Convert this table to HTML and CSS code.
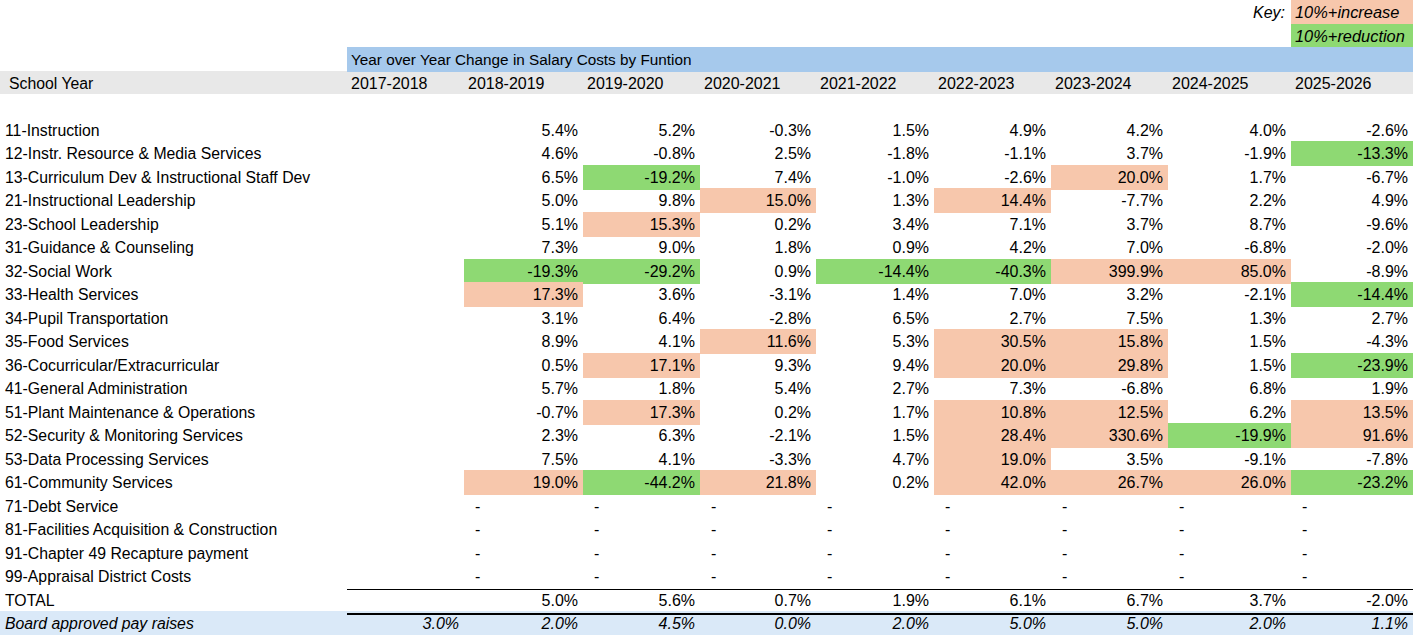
FILE: index.html
```html
<!DOCTYPE html>
<html lang="en">
<head>
<meta charset="utf-8">
<title>Year over Year Change in Salary Costs by Funtion</title>
<link rel="stylesheet" href="styles.css">
</head>
<body>
<div class="sheet">
  <div class="row">
    <div class="c"></div><div class="c"></div><div class="c"></div><div class="c"></div><div class="c"></div><div class="c"></div><div class="c"></div><div class="c"></div>
    <div class="c keylabel">Key:</div><div class="c keycell p">10%+increase</div>
  </div>
  <div class="row">
    <div class="c"></div><div class="c"></div><div class="c"></div><div class="c"></div><div class="c"></div><div class="c"></div><div class="c"></div><div class="c"></div><div class="c"></div>
    <div class="c keycell g">10%+reduction</div>
  </div>
  <div class="row">
    <div class="c"></div><div class="c title">Year over Year Change in Salary Costs by Funtion</div>
  </div>
  <div class="row head">
    <div class="c lab headlab">School Year</div>
    <div class="c">2017-2018</div><div class="c">2018-2019</div><div class="c">2019-2020</div><div class="c">2020-2021</div><div class="c">2021-2022</div><div class="c">2022-2023</div><div class="c">2023-2024</div><div class="c">2024-2025</div><div class="c">2025-2026</div>
  </div>
  <div class="row"></div>

  <div class="row"><div class="c lab">11-Instruction</div><div class="c"></div><div class="c n">5.4%</div><div class="c n">5.2%</div><div class="c n">-0.3%</div><div class="c n">1.5%</div><div class="c n">4.9%</div><div class="c n">4.2%</div><div class="c n">4.0%</div><div class="c n">-2.6%</div></div>
  <div class="row"><div class="c lab">12-Instr. Resource &amp; Media Services</div><div class="c"></div><div class="c n">4.6%</div><div class="c n">-0.8%</div><div class="c n">2.5%</div><div class="c n">-1.8%</div><div class="c n">-1.1%</div><div class="c n">3.7%</div><div class="c n">-1.9%</div><div class="c n g">-13.3%</div></div>
  <div class="row"><div class="c lab">13-Curriculum Dev &amp; Instructional Staff Dev</div><div class="c"></div><div class="c n">6.5%</div><div class="c n g">-19.2%</div><div class="c n">7.4%</div><div class="c n">-1.0%</div><div class="c n">-2.6%</div><div class="c n p">20.0%</div><div class="c n">1.7%</div><div class="c n">-6.7%</div></div>
  <div class="row"><div class="c lab">21-Instructional Leadership</div><div class="c"></div><div class="c n">5.0%</div><div class="c n">9.8%</div><div class="c n p">15.0%</div><div class="c n">1.3%</div><div class="c n p">14.4%</div><div class="c n">-7.7%</div><div class="c n">2.2%</div><div class="c n">4.9%</div></div>
  <div class="row"><div class="c lab">23-School Leadership</div><div class="c"></div><div class="c n">5.1%</div><div class="c n p">15.3%</div><div class="c n">0.2%</div><div class="c n">3.4%</div><div class="c n">7.1%</div><div class="c n">3.7%</div><div class="c n">8.7%</div><div class="c n">-9.6%</div></div>
  <div class="row"><div class="c lab">31-Guidance &amp; Counseling</div><div class="c"></div><div class="c n">7.3%</div><div class="c n">9.0%</div><div class="c n">1.8%</div><div class="c n">0.9%</div><div class="c n">4.2%</div><div class="c n">7.0%</div><div class="c n">-6.8%</div><div class="c n">-2.0%</div></div>
  <div class="row"><div class="c lab">32-Social Work</div><div class="c"></div><div class="c n g">-19.3%</div><div class="c n g">-29.2%</div><div class="c n">0.9%</div><div class="c n g">-14.4%</div><div class="c n g">-40.3%</div><div class="c n p">399.9%</div><div class="c n p">85.0%</div><div class="c n">-8.9%</div></div>
  <div class="row"><div class="c lab">33-Health Services</div><div class="c"></div><div class="c n p">17.3%</div><div class="c n">3.6%</div><div class="c n">-3.1%</div><div class="c n">1.4%</div><div class="c n">7.0%</div><div class="c n">3.2%</div><div class="c n">-2.1%</div><div class="c n g">-14.4%</div></div>
  <div class="row"><div class="c lab">34-Pupil Transportation</div><div class="c"></div><div class="c n">3.1%</div><div class="c n">6.4%</div><div class="c n">-2.8%</div><div class="c n">6.5%</div><div class="c n">2.7%</div><div class="c n">7.5%</div><div class="c n">1.3%</div><div class="c n">2.7%</div></div>
  <div class="row"><div class="c lab">35-Food Services</div><div class="c"></div><div class="c n">8.9%</div><div class="c n">4.1%</div><div class="c n p">11.6%</div><div class="c n">5.3%</div><div class="c n p">30.5%</div><div class="c n p">15.8%</div><div class="c n">1.5%</div><div class="c n">-4.3%</div></div>
  <div class="row"><div class="c lab">36-Cocurricular/Extracurricular</div><div class="c"></div><div class="c n">0.5%</div><div class="c n p">17.1%</div><div class="c n">9.3%</div><div class="c n">9.4%</div><div class="c n p">20.0%</div><div class="c n p">29.8%</div><div class="c n">1.5%</div><div class="c n g">-23.9%</div></div>
  <div class="row"><div class="c lab">41-General Administration</div><div class="c"></div><div class="c n">5.7%</div><div class="c n">1.8%</div><div class="c n">5.4%</div><div class="c n">2.7%</div><div class="c n">7.3%</div><div class="c n">-6.8%</div><div class="c n">6.8%</div><div class="c n">1.9%</div></div>
  <div class="row"><div class="c lab">51-Plant Maintenance &amp; Operations</div><div class="c"></div><div class="c n">-0.7%</div><div class="c n p">17.3%</div><div class="c n">0.2%</div><div class="c n">1.7%</div><div class="c n p">10.8%</div><div class="c n p">12.5%</div><div class="c n">6.2%</div><div class="c n p">13.5%</div></div>
  <div class="row"><div class="c lab">52-Security &amp; Monitoring Services</div><div class="c"></div><div class="c n">2.3%</div><div class="c n">6.3%</div><div class="c n">-2.1%</div><div class="c n">1.5%</div><div class="c n p">28.4%</div><div class="c n p">330.6%</div><div class="c n g">-19.9%</div><div class="c n p">91.6%</div></div>
  <div class="row"><div class="c lab">53-Data Processing Services</div><div class="c"></div><div class="c n">7.5%</div><div class="c n">4.1%</div><div class="c n">-3.3%</div><div class="c n">4.7%</div><div class="c n p">19.0%</div><div class="c n">3.5%</div><div class="c n">-9.1%</div><div class="c n">-7.8%</div></div>
  <div class="row"><div class="c lab">61-Community Services</div><div class="c"></div><div class="c n p">19.0%</div><div class="c n g">-44.2%</div><div class="c n p">21.8%</div><div class="c n">0.2%</div><div class="c n p">42.0%</div><div class="c n p">26.7%</div><div class="c n p">26.0%</div><div class="c n g">-23.2%</div></div>
  <div class="row"><div class="c lab">71-Debt Service</div><div class="c"></div><div class="c d">-</div><div class="c d">-</div><div class="c d">-</div><div class="c d">-</div><div class="c d">-</div><div class="c d">-</div><div class="c d">-</div><div class="c d">-</div></div>
  <div class="row"><div class="c lab">81-Facilities Acquisition &amp; Construction</div><div class="c"></div><div class="c d">-</div><div class="c d">-</div><div class="c d">-</div><div class="c d">-</div><div class="c d">-</div><div class="c d">-</div><div class="c d">-</div><div class="c d">-</div></div>
  <div class="row"><div class="c lab">91-Chapter 49 Recapture payment</div><div class="c"></div><div class="c d">-</div><div class="c d">-</div><div class="c d">-</div><div class="c d">-</div><div class="c d">-</div><div class="c d">-</div><div class="c d">-</div><div class="c d">-</div></div>
  <div class="row last"><div class="c lab">99-Appraisal District Costs</div><div class="c"></div><div class="c d">-</div><div class="c d">-</div><div class="c d">-</div><div class="c d">-</div><div class="c d">-</div><div class="c d">-</div><div class="c d">-</div><div class="c d">-</div></div>
  <div class="row total"><div class="c lab">TOTAL</div><div class="c"></div><div class="c n">5.0%</div><div class="c n">5.6%</div><div class="c n">0.7%</div><div class="c n">1.9%</div><div class="c n">6.1%</div><div class="c n">6.7%</div><div class="c n">3.7%</div><div class="c n">-2.0%</div></div>
  <div class="row board"><div class="c lab">Board approved pay raises</div><div class="c n">3.0%</div><div class="c n">2.0%</div><div class="c n">4.5%</div><div class="c n">0.0%</div><div class="c n">2.0%</div><div class="c n">5.0%</div><div class="c n">5.0%</div><div class="c n">2.0%</div><div class="c n">1.1%</div></div>
</div>
</body>
</html>
```

FILE: styles.css
```css
html, body {
  margin: 0;
  padding: 0;
  background: #ffffff;
}

body {
  font-family: "Liberation Sans", Arial, sans-serif;
  font-size: 16px;
  color: #000000;
}

.sheet {
  width: 1413px;
}

.row {
  display: grid;
  grid-template-columns: 347px 117px 119px 117px 116px 118px 117px 117px 123px 122px;
  height: 23.5px;
  line-height: 25px;
}

.c {
  box-sizing: border-box;
  padding: 0 5px 0 4px;
  white-space: nowrap;
  overflow: visible;
  min-width: 0;
}

.lab {
  padding-left: 5px;
  font-size: 15.8px;
}

.headlab {
  padding-left: 9px;
}

.n {
  text-align: right;
}

.d {
  padding-left: 11px;
}

.p {
  background: #f7c7ac;
}

.g {
  background: #8ed973;
}

.keylabel {
  font-style: italic;
  text-align: right;
  padding-right: 6px;
  font-size: 16px;
}

.keycell {
  font-style: italic;
  font-size: 16.4px;
}

.title {
  grid-column: 2 / -1;
  background: #a6c9ec;
  font-size: 15.3px;
}

.head {
  background: #e8e8e8;
}

.last .c:not(:first-child) {
  border-bottom: 1px solid #000000;
}

.total .c:not(:first-child) {
  border-bottom: 2px solid #000000;
}

.board {
  background: #dae9f8;
  font-style: italic;
}
```
